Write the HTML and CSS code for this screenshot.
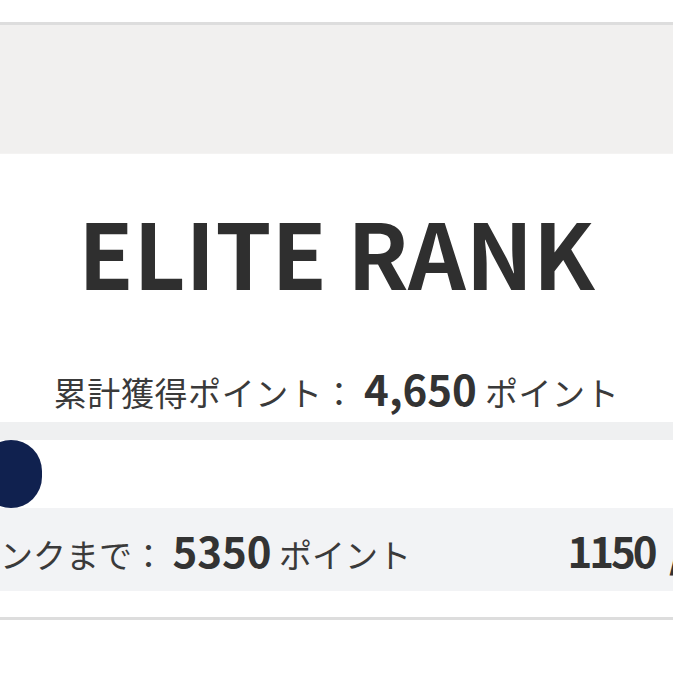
FILE: index.html
```html
<!DOCTYPE html>
<html lang="ja">
<head>
<meta charset="utf-8">
<link rel="stylesheet" href="styles.css">
</head>
<body>
<div class="page">
  <div class="banner"></div>
  <section class="rank-card">
    <h1 class="rank-title">ELITE RANK</h1>
    <p class="total">累計獲得ポイント： <strong class="num">4,650</strong> ポイント</p>
    <div class="track-top"></div>
    <div class="track">
      <div class="fill" style="width: 7%"></div>
    </div>
    <div class="stats">
      <div class="stat-left">次のランクまで： <strong class="num">5350</strong> ポイント</div>
      <div class="stat-right"><strong class="num">1150 / 6500</strong></div>
    </div>
  </section>
  <div class="footer-space"></div>
</div>
</body>
</html>
```

FILE: styles.css
```css
html, body {
  margin: 0;
  padding: 0;
  background: #ffffff;
  overflow: hidden;
}
body {
  font-family: "Noto Sans CJK JP", "Noto Sans", sans-serif;
  color: #333333;
}
.page {
  padding-top: 22px;
}
.banner {
  height: 128px;
  background: #f1f0ef;
  border-top: 3px solid #dddddd;
  border-bottom: 1px solid #f4f3f2;
}
.rank-card {
  padding-top: 52px;
}
.rank-title {
  margin: 0;
  font-size: 90px;
  line-height: 90px;
  font-weight: 700;
  text-align: center;
  color: #2f2f2f;
  letter-spacing: 0;
}
.total {
  margin: 70px 0 0;
  text-align: center;
  font-size: 33px;
  line-height: 44px;
  letter-spacing: 0.6px;
  color: #3a3a3a;
  white-space: nowrap;
}
.num {
  font-size: 42px;
  font-weight: 700;
  letter-spacing: 0;
  color: #333333;
}
.track-top {
  margin-top: 8px;
  height: 18px;
  background: #eff0f1;
}
.track {
  height: 68px;
  background: #ffffff;
  overflow: hidden;
}
.fill {
  height: 68px;
  margin-left: -20px;
  min-width: 62px;
  border-radius: 34px;
  background: #10214f;
}
.stats {
  height: 83px;
  background: #f2f3f5;
  display: flex;
  align-items: center;
  justify-content: space-between;
  white-space: nowrap;
  font-size: 33px;
  color: #3a3a3a;
}
.stat-left {
  margin-left: -99px;
}
.stat-right {
  margin-right: -111px;
}
.stat-right .num {
  letter-spacing: -3px;
  word-spacing: 8px;
}
.footer-space {
  height: 26px;
  border-bottom: 3px solid #dddddd;
}
```
